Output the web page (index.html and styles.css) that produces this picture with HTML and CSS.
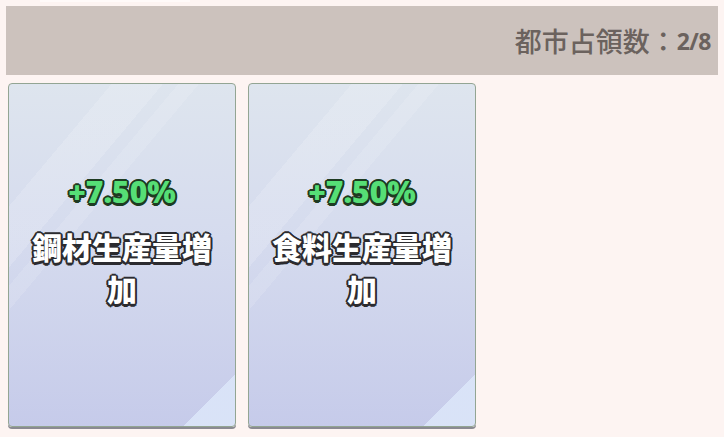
FILE: index.html
```html
<!DOCTYPE html>
<html lang="ja">
<head>
<meta charset="utf-8">
<link rel="stylesheet" href="styles.css">
</head>
<body>
<div class="peek"></div>
<header class="bar">
  <span class="label">都市占領数：</span><span class="count">2/8</span>
</header>
<main class="cards">
  <div class="card">
    <div class="rate">+7.50%</div>
    <div class="title">鋼材生産量増加</div>
  </div>
  <div class="card">
    <div class="rate">+7.50%</div>
    <div class="title">食料生産量増加</div>
  </div>
</main>
</body>
</html>
```
FILE: styles.css
```css
html, body {
  margin: 0;
  padding: 0;
  background: #fdf4f2;
  width: 724px;
  height: 437px;
  overflow: hidden;
  font-family: "Noto Sans CJK JP", "Noto Sans", sans-serif;
}
.peek {
  height: 2px;
  width: 150px;
  margin-left: 40px;
  background: #fffaf9;
}
.bar {
  margin: 4px 6px 0 6px;
  height: 69px;
  background: #ccc2bd;
  display: flex;
  justify-content: flex-end;
  align-items: center;
  padding-right: 7px;
  color: #6b625e;
}
.label {
  font-size: 27px;
  font-weight: 500;
  line-height: 1;
}
.count {
  font-size: 23px;
  font-weight: 700;
  line-height: 1;
  font-family: "Noto Sans", sans-serif;
  padding-top: 2px;
  letter-spacing: -0.5px;
}
.cards {
  display: flex;
  gap: 12px;
  padding: 8px 0 0 8px;
}
.card {
  box-sizing: border-box;
  width: 228px;
  height: 344px;
  border: 1px solid #93a593;
  border-radius: 4px;
  box-shadow: 0 2px 0 #8a8a92;
  background:
    linear-gradient(-45deg, rgba(218,228,248,0.95) 0 9%, transparent 9%),
    linear-gradient(130deg, transparent 0 20%, rgba(255,255,255,0.16) 20% 30%, transparent 30% 33%, rgba(255,255,255,0.12) 33% 37%, transparent 37%),
    linear-gradient(180deg, #dee5ee 0%, #d5dbee 45%, #c6cbea 100%);
  display: flex;
  flex-direction: column;
  align-items: center;
  padding: 89px 12px 0 12px;
}
.rate {
  font-family: "Noto Sans", sans-serif;
  font-weight: 900;
  font-size: 30px;
  line-height: 38px;
  color: #56de76;
  text-shadow:
    2px 0 0 #1e3b22, -2px 0 0 #1e3b22, 0 2px 0 #1e3b22, 0 -2px 0 #1e3b22,
    1.5px 1.5px 0 #1e3b22, -1.5px 1.5px 0 #1e3b22, 1.5px -1.5px 0 #1e3b22, -1.5px -1.5px 0 #1e3b22,
    0 3px 0 #1e3b22;
}
.title {
  margin-top: 14px;
  font-weight: 900;
  font-size: 30px;
  line-height: 42px;
  color: #ffffff;
  text-align: center;
  text-shadow:
    2px 0 0 #2b2b2f, -2px 0 0 #2b2b2f, 0 2px 0 #2b2b2f, 0 -2px 0 #2b2b2f,
    1.5px 1.5px 0 #2b2b2f, -1.5px 1.5px 0 #2b2b2f, 1.5px -1.5px 0 #2b2b2f, -1.5px -1.5px 0 #2b2b2f,
    0 3px 0 #2b2b2f;
}
```
